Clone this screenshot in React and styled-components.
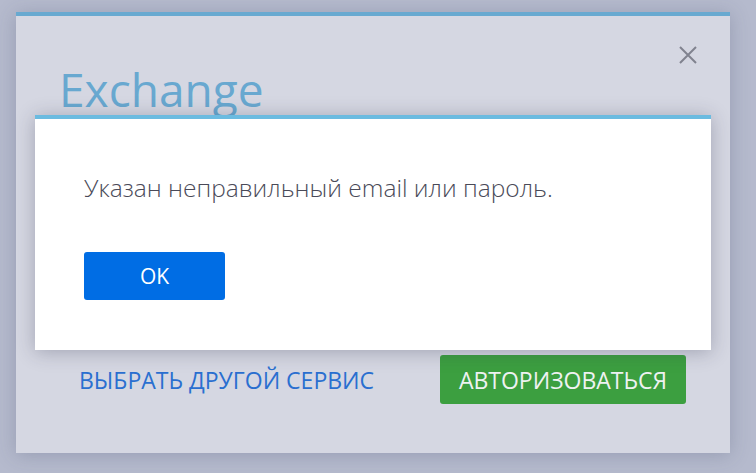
import React from "react";
import styled, { createGlobalStyle } from "styled-components";

const GlobalStyle = createGlobalStyle`
  html, body {
    margin: 0;
    padding: 0;
    background: #b5bacd;
    font-family: "Open Sans", "Noto Sans", sans-serif;
  }
`;

const Page = styled.div`
  width: 756px;
  height: 473px;
  padding: 12px 0 0 16px;
  box-sizing: border-box;
  overflow: hidden;
`;

const Panel = styled.div`
  position: relative;
  width: 714px;
  height: 441px;
  box-sizing: border-box;
  background: #d5d7e2;
  border-top: 4px solid #68a9d0;
  box-shadow: 0 2px 18px rgba(60, 66, 100, 0.25);
  display: flex;
  flex-direction: column;
`;

const CloseBtn = styled.button`
  position: absolute;
  top: 29px;
  right: 32px;
  width: 20px;
  height: 20px;
  padding: 0;
  border: none;
  background: transparent;
  display: flex;
  align-items: center;
  justify-content: center;
`;

const Title = styled.h1`
  margin: 42px 0 0 43px;
  font-size: 46px;
  font-weight: 400;
  line-height: normal;
  color: #68a8d0;
`;

const Footer = styled.div`
  margin-top: auto;
  padding: 0 44px 49px 63px;
  display: flex;
  align-items: center;
  justify-content: space-between;
`;

const LinkBtn = styled.button`
  border: none;
  background: transparent;
  padding: 0;
  font-family: inherit;
  font-size: 23px;
  color: #2a6fd0;
  text-transform: uppercase;
`;

const Button = styled.button`
  border: none;
  border-radius: 3px;
  font-family: inherit;
  color: ${(p) => p.$fg || "#fff"};
  background: ${(p) => p.$bg};
  width: ${(p) => p.$w}px;
  height: ${(p) => p.$h}px;
  font-size: ${(p) => p.$fs}px;
  padding: 0;
`;

const Dialog = styled.div`
  position: absolute;
  top: 99px;
  left: 19px;
  right: 19px;
  height: 235px;
  box-sizing: border-box;
  background: #fff;
  border-top: 4px solid #6bbbe0;
  box-shadow: 0 2px 18px rgba(40, 44, 70, 0.3);
  padding: 0 0 50px 49px;
  display: flex;
  flex-direction: column;
  justify-content: space-between;
`;

const Message = styled.p`
  margin: 54px 0 0;
  font-size: 24.5px;
  font-weight: 300;
  line-height: 30px;
  color: #4a4a58;
`;

const CloseIcon = () => (
  <svg width="20" height="20" viewBox="0 0 20 20">
    <path d="M2 2 L18 18 M18 2 L2 18" stroke="#80828f" strokeWidth="2" fill="none" />
  </svg>
);

export default function App() {
  return (
    <Page>
      <GlobalStyle />
      <Panel>
        <CloseBtn aria-label="close">
          <CloseIcon />
        </CloseBtn>
        <Title>Exchange</Title>
        <Footer>
          <LinkBtn>Выбрать другой сервис</LinkBtn>
          <Button $bg="#3c9f40" $fg="#eef2f2" $w={246} $h={49} $fs={23}>
            АВТОРИЗОВАТЬСЯ
          </Button>
        </Footer>
        <Dialog>
          <Message>Указан неправильный email или пароль.</Message>
          <Button $bg="#006de4" $w={141} $h={48} $fs={21}>
            OK
          </Button>
        </Dialog>
      </Panel>
    </Page>
  );
}
